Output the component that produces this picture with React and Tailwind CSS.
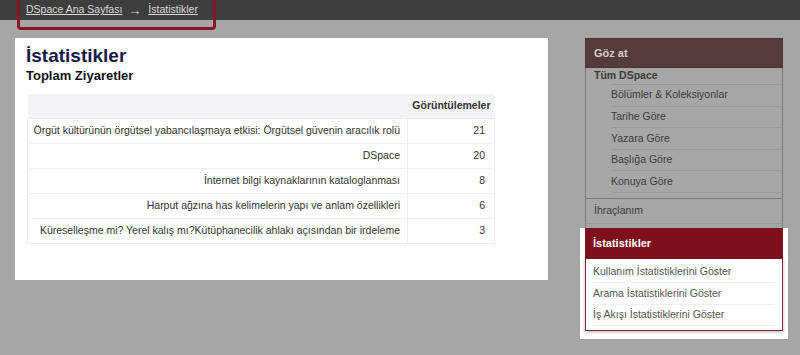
import React from "react";

const rows = [
  ["Örgüt kültürünün örgütsel yabancılaşmaya etkisi: Örgütsel güvenin aracılık rolü", "21"],
  ["DSpace", "20"],
  ["İnternet bilgi kaynaklarının kataloglanması", "8"],
  ["Harput ağzına has kelimelerin yapı ve anlam özellikleri", "6"],
  ["Küreselleşme mi? Yerel kalış mı?Kütüphanecilik ahlakı açısından bir irdeleme", "3"],
];

const browse = ["Bölümler & Koleksiyonlar", "Tarihe Göre", "Yazara Göre", "Başlığa Göre", "Konuya Göre"];
const stats = ["Kullanım İstatistiklerini Göster", "Arama İstatistiklerini Göster", "İş Akışı İstatistiklerini Göster"];

export default function App() {
  return (
    <div
      className="relative w-[800px] h-[355px] overflow-hidden bg-[#a6a6a6] text-[10.5px]"
      style={{ fontFamily: '"Liberation Sans", Arial, sans-serif' }}
    >
      <div className="h-[20px] bg-[#3e3e3e] pl-[26px] flex items-center text-[#d9d9d9] text-[10.5px]">
        <span className="underline">DSpace Ana Sayfası</span>
        <span className="ml-[6px] mr-[7px] text-[13px] leading-none">→</span>
        <span className="underline">İstatistikler</span>
      </div>
      <div className="absolute left-[17px] top-[-4px] w-[199px] h-[34px] border-[3px] border-[#8a1524] rounded-b-[4px]" />

      <div className="flex items-start pt-[18px]">
        <div className="ml-[15px] w-[533px] h-[242px] bg-white pl-[11px] pt-[7px] box-border">
          <div className="text-[19px] font-bold text-[#1a1a4a] leading-[22px]">İstatistikler</div>
          <div className="text-[13px] font-bold text-[#111] leading-[16px] mt-[1px]">Toplam Ziyaretler</div>
          <table className="mt-[10px] ml-[1px] w-[468px] border-collapse text-[#333] text-[10.5px]">
            <thead>
              <tr className="h-[24px] bg-[#f4f4f7]">
                <th className="border-b border-[#ececec]"></th>
                <th className="w-[87px] text-right pr-[4px] font-bold border-b border-[#ececec]">Görüntülemeler</th>
              </tr>
            </thead>
            <tbody>
              {rows.map(([t, v], i) => (
                <tr key={i} className="h-[25px]">
                  <td className="text-right pr-[7px] border border-[#eeeeee] whitespace-nowrap">{t}</td>
                  <td className="text-right pr-[9px] border border-[#eeeeee]">{v}</td>
                </tr>
              ))}
            </tbody>
          </table>
        </div>

        <div className="ml-[37px] w-[198px] text-[#3c3c3c]">
          <div className="h-[30px] bg-[#553b3b] border border-[#4a3434] flex items-center pl-[8px] font-bold text-[11px] text-[#d5cccc]">Göz at</div>
          <div className="border-x border-[#7c7c7c]">
            <div className="h-[16px] flex items-center pl-[8px] font-bold">Tüm DSpace</div>
            <div className="pl-[25px]">
              <div className="border-t border-[#999]" />
              {browse.map((b) => (
                <div key={b} className="h-[21.6px] flex items-center border-b border-[#999] pl-0">{b}</div>
              ))}
            </div>
            <div className="h-[5px]" />
            <div className="border-t border-[#7a7a7a]" />
            <div className="h-[25px] flex items-center pl-[8px] border-b border-[#999] mx-0">İhraçlanım</div>
            <div className="h-[4px]" />
          </div>
          <div className="-mx-[5px] px-[5px] bg-white pb-[8px]">
            <div className="h-[31px] bg-[#7e0f1c] flex items-center pl-[8px] font-bold text-[11px] text-white">İstatistikler</div>
            <div className="border-x border-b border-[#8d2430] px-[7px] pt-[3px] pb-[4px] text-[#555] shadow-[0_1px_3px_rgba(0,0,0,0.3)]">
              {stats.map((s) => (
                <div key={s} className="h-[21.5px] flex items-center border-b border-[#eeeeee]">{s}</div>
              ))}
            </div>
          </div>
        </div>
      </div>
    </div>
  );
}
